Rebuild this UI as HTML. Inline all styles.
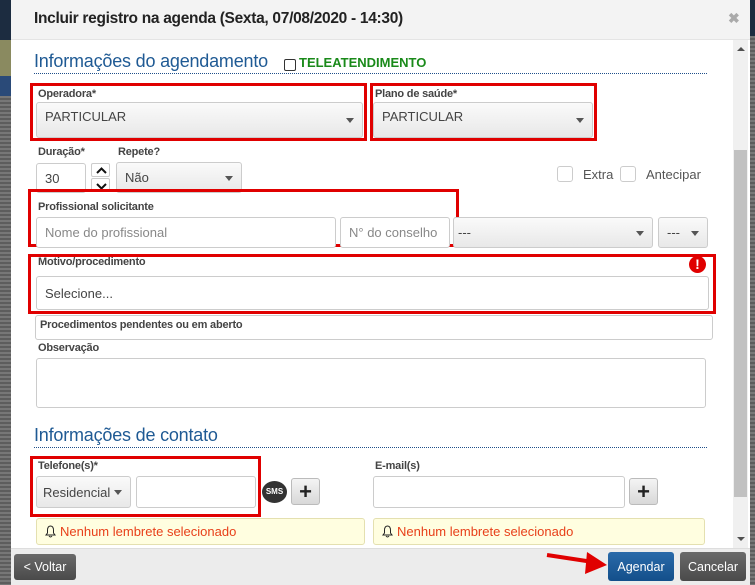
<!DOCTYPE html>
<html><head><meta charset="utf-8"><style>
*{box-sizing:border-box;margin:0;padding:0}
body{width:755px;height:585px;overflow:hidden;position:relative;font-family:"Liberation Sans Narrow","Liberation Sans",sans-serif;background:#6a6a6a;}
.a{position:absolute}
.strip{left:0;top:0;width:12px;height:585px;background:repeating-linear-gradient(#777 0 2px,#5d5d5d 2px 4px)}
.dlg{left:11px;top:0;width:739px;height:585px;background:#fff}
.hdr{left:11px;top:0;width:739px;height:40px;background:#f3f3f3;border-bottom:1px solid #e4e4e4}
.ttl{left:34px;top:10px;font-size:15.5px;font-weight:bold;color:#222;letter-spacing:-0.3px}
.h2{font-size:18px;color:#1f5a94;letter-spacing:-0.2px}
.dot{height:0;border-top:1px dotted #1f4f8a}
.lbl{font-size:11px;font-weight:bold;color:#444;letter-spacing:-0.2px}
.box{border:1px solid #ccc;border-radius:3px;background:#fff;font-size:13px;color:#444;padding-left:8px;display:flex;align-items:center}
.sel{background:linear-gradient(#fafafa,#e8e8e8)}
.ph{color:#888}
.red{border:3px solid #e00000}
.car{position:absolute;right:8px;top:50%;margin-top:-2px;border-left:4px solid transparent;border-right:4px solid transparent;border-top:5px solid #555}
.btn{border-radius:3px;color:#fff;font-size:12.5px;display:flex;align-items:center;justify-content:center}
.note{background:#fffee0;border:1px solid #e4e0b0;border-radius:3px;color:#e8401a;font-size:13px;display:flex;align-items:center;padding-left:8px}
.note svg{margin-right:4px}
.plus{background:linear-gradient(#f4f4f4,#d8d8d8);border:1px solid #bbb;border-radius:3px;font-size:22px;font-weight:bold;color:#222;display:flex;align-items:center;justify-content:center;line-height:1}
.spin{border:1px solid #ccc;border-radius:2px;background:#fff}
</style></head><body>
<div class="a strip"></div>
<div class="a" style="left:0;top:0;width:12px;height:40px;background:#1c2c40"></div>
<div class="a" style="left:0;top:40px;width:12px;height:36px;background:#8a8a60"></div>
<div class="a" style="left:0;top:76px;width:12px;height:20px;background:#2a4a78"></div>
<div class="a" style="left:750px;top:0;width:5px;height:585px;background:repeating-linear-gradient(#777 0 2px,#5d5d5d 2px 4px)"></div>
<div class="a" style="left:750px;top:0;width:5px;height:36px;background:#1c2c40"></div>
<div class="a dlg"></div>
<div class="a hdr"></div>
<div class="a ttl">Incluir registro na agenda (Sexta, 07/08/2020 - 14:30)</div>
<div class="a" style="left:728px;top:10px;font-size:14px;color:#aaa;font-weight:bold">✖</div>
<div class="a" style="left:733px;top:40px;width:15px;height:508px;background:#f0f0f0"></div>
<div class="a" style="left:734px;top:150px;width:13px;height:347px;background:#c1c1c1"></div>
<div class="a" style="left:737px;top:47px;border-left:4px solid transparent;border-right:4px solid transparent;border-bottom:4px solid #505050"></div>
<div class="a" style="left:737px;top:537px;border-left:4px solid transparent;border-right:4px solid transparent;border-top:4px solid #505050"></div>

<div class="a h2" style="left:34px;top:51px">Informações do agendamento</div>
<div class="a" style="left:284px;top:59px;width:12px;height:12px;border:1px solid #333;border-radius:2px"></div>
<div class="a" style="left:299px;top:55px;font-size:13px;font-weight:bold;color:#1a8a1a">TELEATENDIMENTO</div>
<div class="a dot" style="left:34px;top:73px;width:673px"></div>

<div class="a red" style="left:30px;top:83px;width:337px;height:58px"></div>
<div class="a lbl" style="left:38px;top:88px">Operadora*</div>
<div class="a box sel" style="left:36px;top:102px;width:327px;height:36px;padding-bottom:8px">PARTICULAR<span class="car"></span></div>
<div class="a red" style="left:370px;top:83px;width:227px;height:58px"></div>
<div class="a lbl" style="left:375px;top:88px">Plano de saúde*</div>
<div class="a box sel" style="left:373px;top:102px;width:220px;height:36px;padding-bottom:8px">PARTICULAR<span class="car"></span></div>

<div class="a lbl" style="left:38px;top:146px">Duração*</div>
<div class="a lbl" style="left:118px;top:146px">Repete?</div>
<div class="a box" style="left:36px;top:163px;width:50px;height:30px">30</div>
<svg class="a spin" style="left:91px;top:163px" width="19" height="14"><path d="M5 9 L9.5 4.5 L14 9" stroke="#111" stroke-width="2" fill="none"/></svg>
<svg class="a spin" style="left:91px;top:178px" width="19" height="14"><path d="M5 5 L9.5 9.5 L14 5" stroke="#111" stroke-width="2" fill="none"/></svg>
<div class="a box sel" style="left:116px;top:162px;width:126px;height:31px">Não<span class="car"></span></div>
<div class="a" style="left:557px;top:166px;width:16px;height:16px;border:1px solid #ccc;border-radius:3px"></div>
<div class="a" style="left:583px;top:167px;font-size:13px;color:#555">Extra</div>
<div class="a" style="left:620px;top:166px;width:16px;height:16px;border:1px solid #ccc;border-radius:3px"></div>
<div class="a" style="left:646px;top:167px;font-size:13px;color:#555">Antecipar</div>

<div class="a red" style="left:28px;top:189px;width:431px;height:58px"></div>
<div class="a lbl" style="left:38px;top:201px">Profissional solicitante</div>
<div class="a box ph" style="left:36px;top:217px;width:300px;height:31px">Nome do profissional</div>
<div class="a box ph" style="left:340px;top:217px;width:110px;height:31px">N° do conselho</div>
<div class="a box sel" style="left:453px;top:217px;width:200px;height:31px;padding-left:4px">---<span class="car"></span></div>
<div class="a box sel" style="left:658px;top:217px;width:50px;height:31px">---<span class="car"></span></div>

<div class="a red" style="left:28px;top:254px;width:688px;height:60px"></div>
<div class="a lbl" style="left:38px;top:256px">Motivo/procedimento</div>
<div class="a" style="left:689px;top:256px;width:17px;height:17px;border-radius:50%;background:#e00000;color:#fff;font-weight:bold;font-size:14px;text-align:center;line-height:17px">!</div>
<div class="a box" style="left:36px;top:276px;width:673px;height:34px">Selecione...</div>

<div class="a box" style="left:35px;top:315px;width:678px;height:25px;align-items:flex-start;padding-left:4px;padding-top:3px"><span class="lbl">Procedimentos pendentes ou em aberto</span></div>
<div class="a lbl" style="left:38px;top:342px">Observação</div>
<div class="a box" style="left:36px;top:358px;width:670px;height:50px"></div>

<div class="a h2" style="left:34px;top:425px">Informações de contato</div>
<div class="a dot" style="left:34px;top:447px;width:673px"></div>

<div class="a red" style="left:30px;top:456px;width:231px;height:61px"></div>
<div class="a lbl" style="left:38px;top:460px">Telefone(s)*</div>
<div class="a box sel" style="left:36px;top:476px;width:95px;height:32px;padding-left:6px">Residencial<span class="car"></span></div>
<div class="a box" style="left:136px;top:476px;width:120px;height:32px"></div>
<div class="a" style="left:262px;top:481px;width:25px;height:22px;border-radius:50%;background:#333;color:#fff;font-size:8px;font-weight:bold;text-align:center;line-height:22px">SMS</div>
<div class="a plus" style="left:291px;top:478px;width:29px;height:27px">+</div>
<div class="a lbl" style="left:375px;top:460px">E-mail(s)</div>
<div class="a box" style="left:373px;top:476px;width:252px;height:32px"></div>
<div class="a plus" style="left:629px;top:478px;width:29px;height:27px">+</div>

<div class="a note" style="left:36px;top:518px;width:329px;height:27px"><svg width="11" height="13" viewBox="0 0 11 13"><path d="M5.5 1 C3 1 2.5 3.5 2.5 5.5 L2.5 8 L1 10 L10 10 L8.5 8 L8.5 5.5 C8.5 3.5 8 1 5.5 1 Z" fill="none" stroke="#222" stroke-width="1"/><path d="M4 11 Q5.5 13 7 11" fill="none" stroke="#222"/></svg>Nenhum lembrete selecionado</div>
<div class="a note" style="left:373px;top:518px;width:332px;height:27px"><svg width="11" height="13" viewBox="0 0 11 13"><path d="M5.5 1 C3 1 2.5 3.5 2.5 5.5 L2.5 8 L1 10 L10 10 L8.5 8 L8.5 5.5 C8.5 3.5 8 1 5.5 1 Z" fill="none" stroke="#222" stroke-width="1"/><path d="M4 11 Q5.5 13 7 11" fill="none" stroke="#222"/></svg>Nenhum lembrete selecionado</div>

<div class="a" style="left:11px;top:548px;width:739px;height:37px;background:#ececec;border-top:1px solid #ddd"></div>
<div class="a btn" style="left:14px;top:554px;width:62px;height:26px;background:linear-gradient(#6a6a6a,#4a4a4a)">&lt; Voltar</div>
<div class="a btn" style="left:608px;top:552px;width:66px;height:29px;background:linear-gradient(#2a6aaa,#134f8a)">Agendar</div>
<div class="a btn" style="left:680px;top:552px;width:66px;height:29px;background:linear-gradient(#6a6a6a,#4a4a4a)">Cancelar</div>
<svg class="a" style="left:545px;top:550px" width="65" height="26"><line x1="2" y1="5" x2="48" y2="12" stroke="#e00000" stroke-width="4"/><polygon points="62,15 42,2 40,24" fill="#e00000"/></svg>
</body></html>
